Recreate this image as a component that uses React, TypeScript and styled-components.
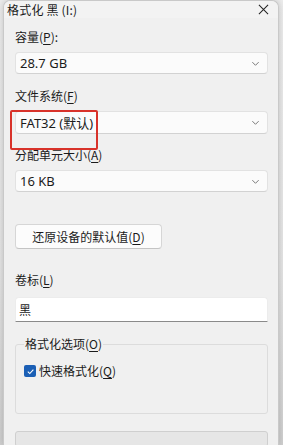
import styled, { createGlobalStyle } from "styled-components";

const GlobalStyle = createGlobalStyle`
  html, body {
    margin: 0;
    padding: 0;
    height: 100%;
    overflow: hidden;
  }
  body {
    background: #e2e2e2;
    font-family: "Noto Sans", "Noto Sans CJK SC", sans-serif;
    color: #1b1b1b;
  }
`;

const Desktop = styled.div`
  height: 100vh;
  padding-left: 3px;
  padding-right: 4px;
  background: linear-gradient(180deg, #ececec 0%, #e4e4e4 60%, #cfcfcf 100%);
`;

const Window = styled.div`
  position: relative;
  height: 100%;
  box-sizing: border-box;
  background: #f0f0f0;
  border: 1px solid #c9c9c9;
  border-bottom: none;
  border-radius: 7px 7px 0 0;
  box-shadow: 0 0 6px rgba(0, 0, 0, 0.18);
  display: flex;
  flex-direction: column;
`;

const TitleBar = styled.div`
  height: 25px;
  display: flex;
  align-items: center;
  justify-content: space-between;
  padding: 0 8px 0 3px;
  background: #f3f3f3;
  border-radius: 7px 7px 0 0;
  font-size: 12px;
`;

const Title = styled.span`
  font-family: "Noto Sans CJK SC", sans-serif;
  letter-spacing: 0.2px;
`;

const CloseButton = styled.div`
  width: 14px;
  height: 14px;
  display: flex;
  align-items: center;
  justify-content: center;
  svg {
    width: 11px;
    height: 11px;
  }
`;

const Content = styled.div`
  display: flex;
  flex-direction: column;
  padding: 11px 10px 0 11px;
`;

const Label = styled.div<{ $gap?: number }>`
  font-family: "Noto Sans CJK SC", sans-serif;
  font-size: 12px;
  line-height: 16px;
  margin-top: ${(p) => p.$gap ?? 0}px;
  margin-bottom: 7px;
  u {
    text-underline-offset: 2px;
  }
`;

const Combo = styled.div<{ $h?: number }>`
  height: ${(p) => p.$h ?? 22}px;
  box-sizing: border-box;
  background: #fbfbfb;
  border: 1px solid #e2e2e2;
  border-bottom-color: #d2d2d2;
  border-radius: 4px;
  display: flex;
  align-items: center;
  justify-content: space-between;
  padding: 0 7px 0 4px;
  font-family: "Noto Sans", "Noto Sans CJK SC", sans-serif;
  font-size: 13px;
  svg {
    width: 9px;
    height: 9px;
  }
`;

const Button = styled.div`
  margin-top: 32px;
  width: 147px;
  height: 25px;
  box-sizing: border-box;
  background: #fcfcfc;
  border: 1px solid #d6d6d6;
  border-bottom-color: #c4c4c4;
  border-radius: 4px;
  display: flex;
  align-items: center;
  justify-content: center;
  font-family: "Noto Sans CJK SC", sans-serif;
  font-size: 12px;
  u {
    text-underline-offset: 2px;
  }
`;

const TextBox = styled.div`
  height: 25px;
  box-sizing: border-box;
  background: #ffffff;
  border: 1px solid #ececec;
  border-bottom: 1px solid #8a8a8a;
  border-radius: 4px 4px 0 0;
  display: flex;
  align-items: center;
  padding-left: 3px;
  font-family: "Noto Sans CJK SC", sans-serif;
  font-size: 12px;
`;

const GroupBox = styled.fieldset`
  margin: 14px 0 0;
  padding: 4px 8px 0;
  height: 78px;
  box-sizing: border-box;
  border: 1px solid #dcdcdc;
  border-radius: 3px;
  font-family: "Noto Sans CJK SC", sans-serif;
  font-size: 12px;
`;

const Legend = styled.legend`
  padding: 0 1px;
  margin-left: 0;
  line-height: 16px;
  u {
    text-underline-offset: 2px;
  }
`;

const CheckRow = styled.div`
  display: flex;
  align-items: center;
  gap: 3px;
  margin-top: 7px;
  line-height: 16px;
  u {
    text-underline-offset: 2px;
  }
`;

const CheckBox = styled.div`
  width: 12px;
  height: 12px;
  border-radius: 2px;
  background: #1b5fb5;
  display: flex;
  align-items: center;
  justify-content: center;
  svg {
    width: 9px;
    height: 9px;
  }
`;

const Progress = styled.div`
  margin-top: 17px;
  height: 14px;
  background: #e6e6e6;
  border: 1px solid #cfcfcf;
  border-radius: 3px;
`;

const Highlight = styled.div`
  position: absolute;
  left: 6px;
  top: 109px;
  width: 84px;
  height: 36px;
  border: 2px solid #d8322a;
  border-radius: 2px;
  pointer-events: none;
`;

const Chevron = () => (
  <svg viewBox="0 0 10 10" fill="none">
    <path d="M1.5 3.5 L5 7 L8.5 3.5" stroke="#5a5a5a" strokeWidth="0.9" />
  </svg>
);

export default function App() {
  return (
    <>
      <GlobalStyle />
      <Desktop>
        <Window>
          <TitleBar>
            <Title>格式化 黑 (I:)</Title>
            <CloseButton>
              <svg viewBox="0 0 12 12" fill="none">
                <path d="M1 1 L11 11 M11 1 L1 11" stroke="#222" strokeWidth="1.1" />
              </svg>
            </CloseButton>
          </TitleBar>
          <Content>
            <Label>
              容量(<u>P</u>):
            </Label>
            <Combo>
              <span>28.7 GB</span>
              <Chevron />
            </Combo>
            <Label $gap={14}>
              文件系统(<u>F</u>)
            </Label>
            <Combo $h={23}>
              <span>FAT32 (默认)</span>
              <Chevron />
            </Combo>
            <Label $gap={13}>
              分配单元大小(<u>A</u>)
            </Label>
            <Combo>
              <span>16 KB</span>
              <Chevron />
            </Combo>
            <Button>
              还原设备的默认值(<u>D</u>)
            </Button>
            <Label $gap={23} style={{ marginBottom: 9 }}>
              卷标(<u>L</u>)
            </Label>
            <TextBox>黑</TextBox>
            <GroupBox>
              <Legend>
                格式化选项(<u>O</u>)
              </Legend>
              <CheckRow>
                <CheckBox>
                  <svg viewBox="0 0 10 10" fill="none">
                    <path d="M2 5.2 L4.2 7.3 L8.2 2.8" stroke="#fff" strokeWidth="1.2" />
                  </svg>
                </CheckBox>
                <span>
                  快速格式化(<u>Q</u>)
                </span>
              </CheckRow>
            </GroupBox>
            <Progress />
          </Content>
          <Highlight />
        </Window>
      </Desktop>
    </>
  );
}
